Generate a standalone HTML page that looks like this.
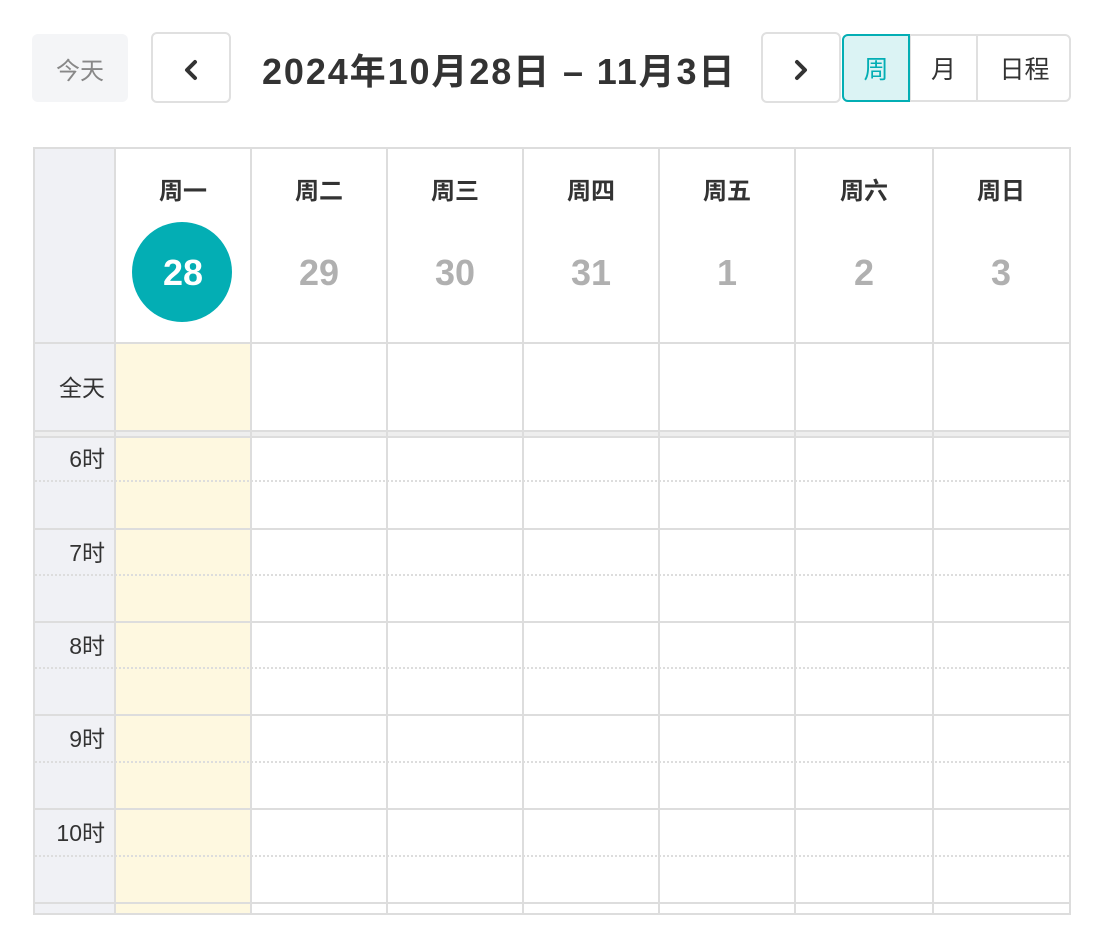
<!DOCTYPE html>
<html><head><meta charset="utf-8"><style>
*{box-sizing:border-box;margin:0;padding:0}
body{width:1104px;height:948px;background:#fff;font-family:"Liberation Sans","Noto Sans CJK SC",sans-serif;color:#333;position:relative;overflow:hidden}
.a{position:absolute}
.btn{position:absolute;border:2px solid #e0e0e0;border-radius:6px;background:#fff;display:flex;align-items:center;justify-content:center}
.v{position:absolute;top:147px;bottom:33px;width:2px;background:#ddd}
.h{position:absolute;left:33px;width:1036px;height:2px;background:#ddd}
.d{position:absolute;left:35px;width:1034px;border-top:2px dotted #ddd;height:0}
.wk{position:absolute;top:171px;font-size:24px;font-weight:bold;text-align:center;width:136px;color:#333}
.dn{position:absolute;top:252px;font-size:36px;font-weight:bold;text-align:center;width:136px;color:#b0b0b0}
.hr{position:absolute;left:35px;width:70px;text-align:right;font-size:23px;color:#333}
</style></head><body>
<div class="a" style="left:32px;top:34px;width:96px;height:68px;background:#f4f5f7;border-radius:6px;color:#888;font-size:24px;display:flex;align-items:center;justify-content:center">今天</div>
<div class="btn" style="left:151px;top:32px;width:80px;height:71px"><svg width="20" height="30" viewBox="0 0 20 30" style="margin-top:4px"><path d="M14 7 L6 15 L14 23" stroke="#333" stroke-width="4" fill="none" stroke-linecap="round" stroke-linejoin="round"/></svg></div>
<div class="a" style="left:262px;top:43px;font-size:36px;font-weight:bold;color:#333;white-space:nowrap;letter-spacing:1.9px">2024年10月28日 – 11月3日</div>
<div class="btn" style="left:761px;top:32px;width:80px;height:71px"><svg width="20" height="30" viewBox="0 0 20 30" style="margin-top:4px"><path d="M6 7 L14 15 L6 23" stroke="#333" stroke-width="4" fill="none" stroke-linecap="round" stroke-linejoin="round"/></svg></div>
<div class="a" style="left:842px;top:34px;width:229px;height:68px;border:2px solid #e0e0e0;border-radius:6px"></div>
<div class="a" style="left:909px;top:34px;width:2px;height:68px;background:#e0e0e0"></div>
<div class="a" style="left:976px;top:34px;width:2px;height:68px;background:#e0e0e0"></div>
<div class="a" style="left:842px;top:34px;width:68px;height:68px;border:2px solid #03aeb4;background:#dbf3f4;border-radius:6px 0 0 6px;color:#03aeb4;font-size:25px;display:flex;align-items:center;justify-content:center">周</div>
<div class="a" style="left:911px;top:34px;width:65px;height:68px;font-size:25px;display:flex;align-items:center;justify-content:center">月</div>
<div class="a" style="left:978px;top:34px;width:93px;height:68px;font-size:25px;display:flex;align-items:center;justify-content:center">日程</div>

<div class="a" style="left:33px;top:147px;width:82px;height:768px;background:#f0f1f5"></div>
<div class="a" style="left:115px;top:343px;width:136px;height:572px;background:#fef8e0"></div>
<div class="a" style="left:33px;top:431px;width:1036px;height:6px;background:#eee"></div>

<div class="a" style="left:33px;top:147px;width:1038px;height:768px;border:2px solid #ddd"></div>
<div class="v" style="left:114px"></div><div class="v" style="left:250px"></div><div class="v" style="left:386px"></div><div class="v" style="left:522px"></div><div class="v" style="left:658px"></div><div class="v" style="left:794px"></div><div class="v" style="left:932px"></div>

<div class="h" style="top:342px"></div><div class="h" style="top:430px"></div><div class="h" style="top:436px"></div>
<div class="h" style="top:528px"></div><div class="h" style="top:621px"></div><div class="h" style="top:714px"></div><div class="h" style="top:808px"></div><div class="h" style="top:902px"></div>
<div class="d" style="top:480px"></div><div class="d" style="top:574px"></div><div class="d" style="top:667px"></div><div class="d" style="top:761px"></div><div class="d" style="top:855px"></div>

<div class="wk" style="left:115px">周一</div><div class="wk" style="left:251px">周二</div><div class="wk" style="left:387px">周三</div><div class="wk" style="left:523px">周四</div><div class="wk" style="left:659px">周五</div><div class="wk" style="left:796px">周六</div><div class="wk" style="left:933px">周日</div>
<div class="a" style="left:132px;top:222px;width:100px;height:100px;border-radius:50%;background:#03aeb4"></div>
<div class="dn" style="left:115px;color:#fff">28</div><div class="dn" style="left:251px">29</div><div class="dn" style="left:387px">30</div><div class="dn" style="left:523px">31</div><div class="dn" style="left:659px">1</div><div class="dn" style="left:796px">2</div><div class="dn" style="left:933px">3</div>

<div class="hr" style="top:369px">全天</div>
<div class="hr" style="top:440px">6时</div><div class="hr" style="top:534px">7时</div><div class="hr" style="top:627px">8时</div><div class="hr" style="top:720px">9时</div><div class="hr" style="top:814px">10时</div>
</body></html>
